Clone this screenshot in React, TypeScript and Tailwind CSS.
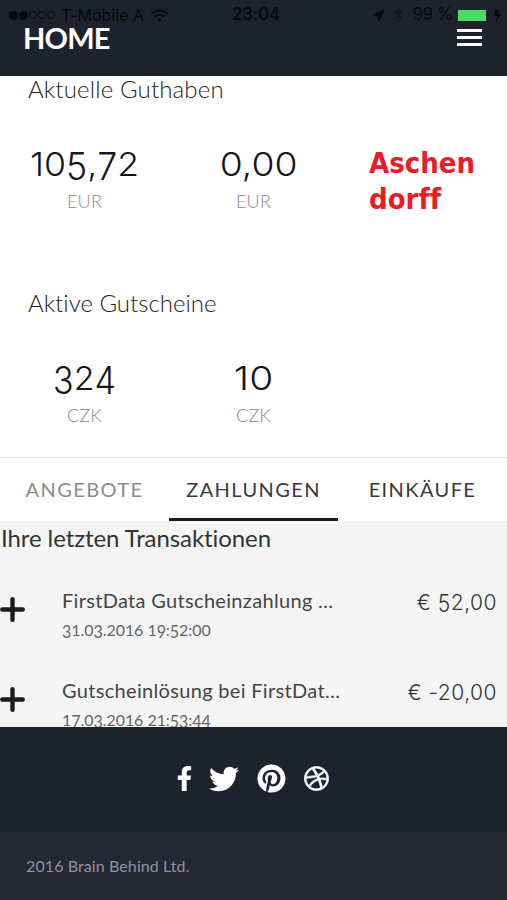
import { Plus } from "lucide-react";
import { FaBluetoothB, FaBolt, FaDribbble, FaFacebookF, FaLocationArrow, FaPinterest, FaTwitter, FaWifi } from "react-icons/fa";

const FONT = "font-['Lato',sans-serif] [font-variant-ligatures:none]";

// 3, 4, 5, 7 and 9 hang below the baseline like old-style figures
function Figures({ text, drop }: { text: string; drop: string }) {
  return (
    <>
      {text.split("").map((ch, i) =>
        "34579".includes(ch) ? (
          <span key={i} className={`inline-block ${drop}`}>{ch}</span>
        ) : (
          ch
        )
      )}
    </>
  );
}

function StatusBar() {
  return (
    <div className="flex h-[27px] items-center pt-[3px] pl-[9px] pr-[4px] font-['Inter',sans-serif] text-[16px] text-[#07090e]">
      <div className="flex w-[223px] items-center">
        <div className="flex gap-[1px]">
          <span className="size-[9px] rounded-full bg-[#07090e]" />
          <span className="size-[9px] rounded-full bg-[#07090e]" />
          <span className="size-[8px] rounded-full border border-[#07090e]" />
          <span className="size-[8px] rounded-full border border-[#07090e]" />
          <span className="size-[8px] rounded-full border border-[#07090e]" />
        </div>
        <span className="ml-[6px] whitespace-nowrap">T-Mobile A</span>
        <FaWifi size={17} className="ml-[7px]" />
      </div>
      <span className="text-[17px] font-semibold tracking-[-0.3px]">23:04</span>
      <div className="ml-auto flex items-center">
        <FaLocationArrow size={11} />
        <FaBluetoothB size={16} className="ml-[6px] opacity-50" />
        <span className="ml-[6px] whitespace-nowrap text-[17px] tracking-[-0.5px]">99 %</span>
        <span className="ml-[5px] h-[11px] w-[28px] bg-[#4cd964]" />
        <span className="ml-px h-[4px] w-[2px] rounded-r bg-[#07090e]" />
        <FaBolt size={11} className="ml-[3px]" />
      </div>
    </div>
  );
}

function Balance({ value, currency, stretch }: { value: string; currency: string; stretch: string }) {
  return (
    <div className="text-center">
      <div className={`h-[48px] font-['Inter',sans-serif] text-[33px] font-[350] leading-[48px] text-[#14161d] ${stretch}`}>
        <Figures text={value} drop="translate-y-[2px] scale-y-[1.16]" />
      </div>
      <div className="h-[27px] text-[18px] font-light leading-[26px] tracking-[0.2px] text-[#888]">{currency}</div>
    </div>
  );
}

function Transaction({ title, date, amount }: { title: string; date: string; amount: string }) {
  return (
    <div className="flex h-[90px]">
      <Plus size={35} strokeWidth={3} className="-ml-[5px] mt-[6px] shrink-0 text-[#1c1c1c]" />
      <div className="ml-[32px] w-[290px] whitespace-nowrap">
        <div className="h-[30px] text-[20px] leading-[28px] tracking-[0.32px] text-[#444]">{title}</div>
        <div className="h-[30px] text-[16px] leading-[28px] tracking-[-0.05px] text-[#666]">
          <Figures text={date} drop="translate-y-[1px] scale-y-[1.12]" />
        </div>
      </div>
      <div className="ml-auto mr-[10px] whitespace-nowrap font-['Inter',sans-serif] text-[21px] font-[350] leading-[34px] tracking-[0.5px] text-[#333]">
        <Figures text={amount} drop="translate-y-[1px] scale-y-[1.14]" />
      </div>
    </div>
  );
}

export default function App() {
  return (
    <div className={`flex h-[900px] w-[507px] flex-col overflow-hidden bg-white ${FONT}`}>
      <header className="h-[76px] shrink-0 bg-[#1e222c]">
        <StatusBar />
        <div className="flex h-[22px] items-center justify-between pl-[23px] pr-[25px]">
          <h1 className="text-[29px] font-bold leading-[20px] tracking-[-0.8px] text-white">HOME</h1>
          <div className="-mt-[2px] flex w-[25px] flex-col gap-[4px]">
            <span className="h-[3px] bg-white" />
            <span className="h-[3px] bg-white" />
            <span className="h-[3px] bg-white" />
          </div>
        </div>
      </header>

      <main className="h-[381px] shrink-0">
        <h2 className="h-[27px] pl-[28px] text-[24px] font-light leading-[25px] tracking-[0.15px] text-[#222]">Aktuelle Guthaben</h2>
        <div className="mt-[37px] grid h-[150px] grid-cols-3">
          <Balance value="105,72" currency="EUR" stretch="scale-x-[1.08]" />
          <Balance value="0,00" currency="EUR" stretch="scale-x-[1.13] pl-[9px]" />
          <div className="pl-[31px] pt-[5px] font-['DejaVu_Sans_Condensed','DejaVu_Sans',sans-serif] text-[29px] font-bold leading-[36px] text-[#ed1c24]">
            Aschen
            <br />
            dorff
          </div>
        </div>
        <h2 className="h-[28px] pl-[28px] text-[24px] font-light leading-[26px] text-[#222]">Aktive Gutscheine</h2>
        <div className="mt-[36px] grid grid-cols-3">
          <Balance value="324" currency="CZK" stretch="scale-x-[1.03]" />
          <Balance value="10" currency="CZK" stretch="scale-x-[1.18]" />
        </div>
      </main>

      <nav className="grid h-[64px] shrink-0 grid-cols-3 border-t border-[#e4e4e4] text-center text-[20px] leading-[62px] tracking-[1.4px] text-[#3a3a3a]">
        <span className="h-[63px] text-[#8c8c8c]">ANGEBOTE</span>
        <span className="h-[63px] border-b-[3px] border-[#1c1c20]">ZAHLUNGEN</span>
        <span className="h-[63px]">EINKÄUFE</span>
      </nav>

      <section className="h-[206px] shrink-0 overflow-hidden bg-[#f5f5f5]">
        <h2 className="h-[35px] pl-px text-[24px] leading-[33px] tracking-[-0.08px] text-[#333]">Ihre letzten Transaktionen</h2>
        <div className="mt-[30px]">
          <Transaction title="FirstData Gutscheinzahlung …" date="31.03.2016 19:52:00" amount="€ 52,00" />
          <Transaction title="Gutscheinlösung bei FirstDat…" date="17.03.2016 21:53:44" amount="€ -20,00" />
        </div>
      </section>

      <footer className="flex flex-1 flex-col bg-[#1e222c]">
        <div className="flex h-[105px] items-center pb-[2px] pl-[172px] text-white">
          <FaFacebookF size={25} />
          <FaTwitter size={30} className="ml-[12px]" />
          <FaPinterest size={29} className="ml-[18px]" />
          <FaDribbble size={25} strokeWidth={14} stroke="currentColor" className="ml-[18px]" />
        </div>
        <div className="flex-1 bg-[#252833] pl-[26px] text-[16px] leading-[68px] tracking-[0.1px] text-[#9093a0]">2016 Brain Behind Ltd.</div>
      </footer>
    </div>
  );
}
